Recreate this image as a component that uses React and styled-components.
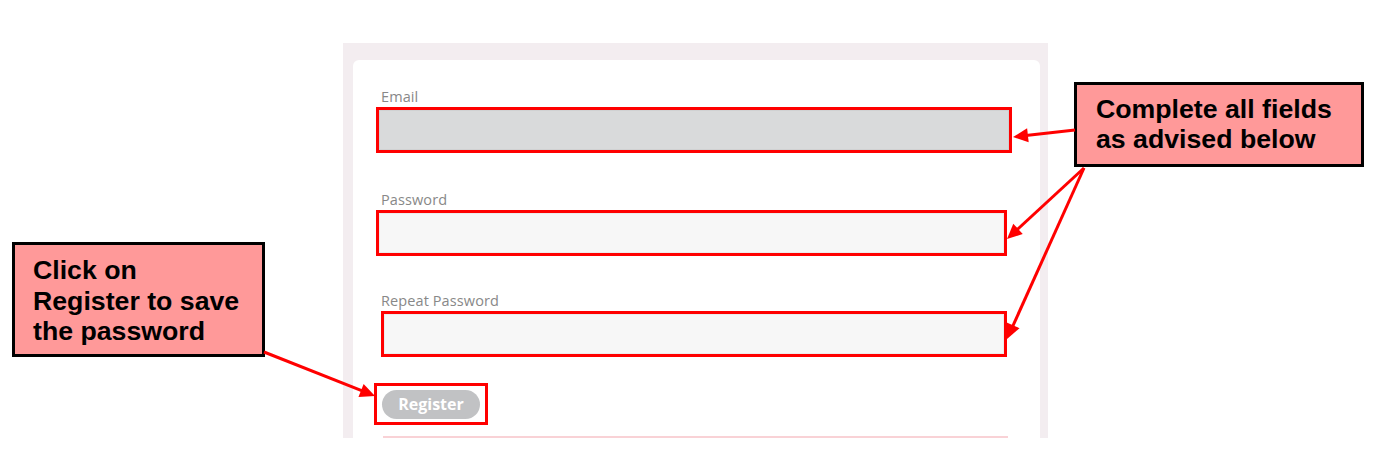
import React from 'react';
import styled, { createGlobalStyle } from 'styled-components';

const GlobalStyle = createGlobalStyle`
  html, body {
    margin: 0;
    padding: 0;
    background: #ffffff;
  }
  * {
    box-sizing: border-box;
  }
`;

const Page = styled.div`
  position: relative;
  width: 1377px;
  height: 451px;
  padding: 43px 0 0 343px;
  overflow: hidden;
  font-family: 'Open Sans', Lato, sans-serif;
`;

const Panel = styled.div`
  display: flex;
  width: 705px;
  height: 395px;
  padding: 17px 8px 0 10px;
  background: #f3edf0;
  overflow: hidden;
`;

const Card = styled.div`
  flex: 1;
  display: flex;
  flex-direction: column;
  padding: 28px 0 0 28px;
  background: #ffffff;
  border-radius: 6px 6px 0 0;
`;

const Field = styled.div`
  display: flex;
  flex-direction: column;
  margin-top: ${p => p.$gap || 0}px;
`;

const Label = styled.label`
  font-size: 14.5px;
  line-height: 17px;
  letter-spacing: 0.1px;
  color: #888888;
  margin-bottom: 2px;
`;

const Highlight = styled.div`
  display: flex;
  align-items: center;
  justify-content: center;
  width: ${p => p.$width}px;
  height: ${p => p.$height || 46}px;
  margin-left: ${p => p.$shift || 0}px;
  margin-top: ${p => p.$top || 0}px;
  border: 3px solid #ff0000;
`;

const Input = styled.div`
  width: 100%;
  height: 100%;
  background: ${p => p.$bg};
  border: 1px solid ${p => p.$line};
`;

const Button = styled.button`
  width: 98px;
  height: 29px;
  border: none;
  border-radius: 15px;
  background: #c1c2c4;
  color: #ffffff;
  font-family: 'Open Sans', Lato, sans-serif;
  font-weight: 700;
  font-size: 16px;
  padding: 0;
`;

const Divider = styled.div`
  width: 625px;
  height: 2px;
  margin: 11px 0 0 2px;
  background: #f9d2d6;
`;

const Callout = styled.div`
  position: absolute;
  left: ${p => p.$x}px;
  top: ${p => p.$y}px;
  width: ${p => p.$w}px;
  height: ${p => p.$h}px;
  padding: ${p => p.$pt}px 0 0 ${p => p.$pl}px;
  background: #ff9999;
  border: 3px solid #000000;
  font-family: 'Liberation Sans', Arial, sans-serif;
  font-weight: 700;
  font-size: 26.7px;
  line-height: ${p => p.$lh}px;
  color: #000000;
  white-space: nowrap;
`;

const Overlay = styled.svg`
  position: absolute;
  left: 0;
  top: 0;
  pointer-events: none;
`;

function Arrow({ from, to }) {
  const [x1, y1] = from;
  const [x2, y2] = to;
  const dx = x2 - x1;
  const dy = y2 - y1;
  const len = Math.hypot(dx, dy);
  const ux = dx / len;
  const uy = dy / len;
  const head = 15;
  const half = 7;
  const bx = x2 - ux * head;
  const by = y2 - uy * head;
  const pts = [
    `${x2},${y2}`,
    `${bx - uy * half},${by + ux * half}`,
    `${bx + uy * half},${by - ux * half}`
  ].join(' ');

  return (
    <g>
      <line x1={x1} y1={y1} x2={bx + ux * 2} y2={by + uy * 2} stroke="#ff0000" strokeWidth="3" />
      <polygon points={pts} fill="#ff0000" />
    </g>
  );
}

const fields = [
  { label: 'Email', width: 636, shift: -5, bg: '#d9dadb', line: '#d0d1d2', gap: 0 },
  { label: 'Password', width: 631, shift: -5, bg: '#f7f7f7', line: '#ececec', gap: 38 },
  { label: 'Repeat Password', width: 626, shift: 0, bg: '#f7f7f7', line: '#ececec', gap: 36 }
];

const arrows = [
  { from: [1075, 130], to: [1013, 137] },
  { from: [1084, 168], to: [1007, 239] },
  { from: [1084, 168], to: [1007, 339] },
  { from: [264, 352], to: [375, 396] }
];

export default function App() {
  return (
    <>
      <GlobalStyle />
      <Page>
        <Panel>
          <Card>
            {fields.map(f => (
              <Field key={f.label} $gap={f.gap}>
                <Label>{f.label}</Label>
                <Highlight $width={f.width} $shift={f.shift}>
                  <Input $bg={f.bg} $line={f.line} />
                </Highlight>
              </Field>
            ))}
            <Highlight $width={114} $height={43} $shift={-7} $top={26}>
              <Button>Register</Button>
            </Highlight>
            <Divider />
          </Card>
        </Panel>

        <Callout $x={1074} $y={82} $w={290} $h={85} $pt={9} $pl={19} $lh={30}>
          Complete all fields
          <br />
          as advised below
        </Callout>
        <Callout $x={12} $y={242} $w={253} $h={115} $pt={10} $pl={18} $lh={30.5}>
          Click on
          <br />
          Register to save
          <br />
          the password
        </Callout>

        <Overlay width="1377" height="451">
          {arrows.map((a, i) => (
            <Arrow key={i} from={a.from} to={a.to} />
          ))}
        </Overlay>
      </Page>
    </>
  );
}
